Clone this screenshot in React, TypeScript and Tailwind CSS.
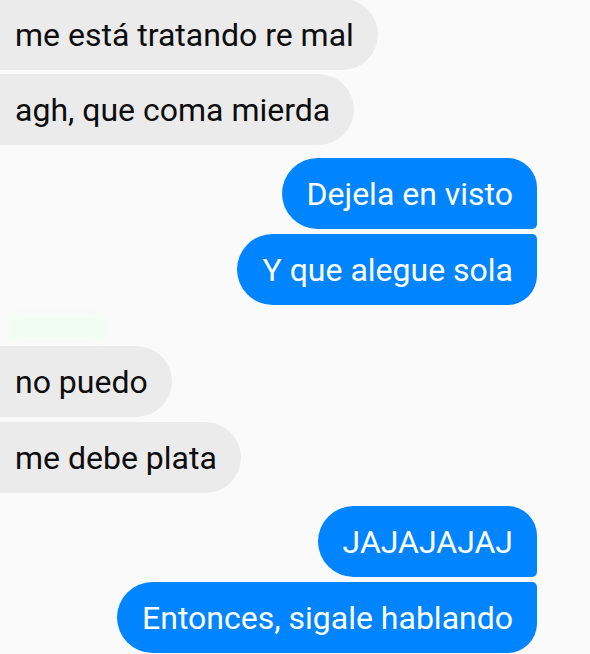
import * as React from 'react';

const font = { fontFamily: 'Roboto, "Noto Sans", sans-serif' };

export default function App() {
  return (
    <div
      className="h-[654px] w-[590px] overflow-hidden bg-[#fafafa] text-[32px] leading-[37px]"
      style={font}
    >
      <div className="-mt-px flex flex-col">
        {/* grupo 1 (ella) */}
        <div className="flex flex-col items-start gap-[4px]">
          <div className="-ml-10 rounded-r-[36px] bg-[#ebebeb] pb-[16px] pl-[55px] pr-[24px] pt-[18px] text-[#0d0d0d]">
            me está tratando re mal
          </div>
          <div className="-ml-10 rounded-r-[36px] bg-[#ebebeb] pb-[16px] pl-[55px] pr-[24px] pt-[18px] text-[#0d0d0d]">
            agh, que coma mierda
          </div>
        </div>

        {/* grupo 2 (yo) */}
        <div className="mt-[13px] flex flex-col items-end gap-[5px] pr-[53px]">
          <div className="rounded-l-[36px] rounded-br-[5px] rounded-tr-[30px] bg-[#0084ff] pb-[16px] pl-[25px] pr-[24px] pt-[18px] text-white">
            Dejela en visto
          </div>
          <div className="rounded-l-[36px] rounded-br-[30px] rounded-tr-[5px] bg-[#0084ff] pb-[16px] pl-[25px] pr-[24px] pt-[18px] text-white">
            Y que alegue sola
          </div>
        </div>

        {/* manchita verde */}
        <div className="h-[41px] pl-[8px] pt-[9px]">
          <div className="h-[26px] w-[98px] rounded-md bg-[#f1fcf3] blur-[3px]" />
        </div>

        {/* grupo 3 (ella) */}
        <div className="flex flex-col items-start gap-[5px]">
          <div className="-ml-10 rounded-r-[36px] bg-[#ebebeb] pb-[16px] pl-[55px] pr-[24px] pt-[18px] text-[#0d0d0d]">
            no puedo
          </div>
          <div className="-ml-10 rounded-r-[36px] bg-[#ebebeb] pb-[16px] pl-[55px] pr-[24px] pt-[18px] text-[#0d0d0d]">
            me debe plata
          </div>
        </div>

        {/* grupo 4 (yo) */}
        <div className="mt-[13px] flex flex-col items-end gap-[5px] pr-[53px]">
          <div className="rounded-l-[36px] rounded-br-[5px] rounded-tr-[30px] bg-[#0084ff] pb-[16px] pl-[25px] pr-[24px] pt-[18px] text-white">
            JAJAJAJAJ
          </div>
          <div className="rounded-l-[36px] rounded-br-[30px] rounded-tr-[5px] bg-[#0084ff] pb-[16px] pl-[25px] pr-[24px] pt-[18px] text-white">
            Entonces, sigale hablando
          </div>
        </div>
      </div>
    </div>
  );
}
